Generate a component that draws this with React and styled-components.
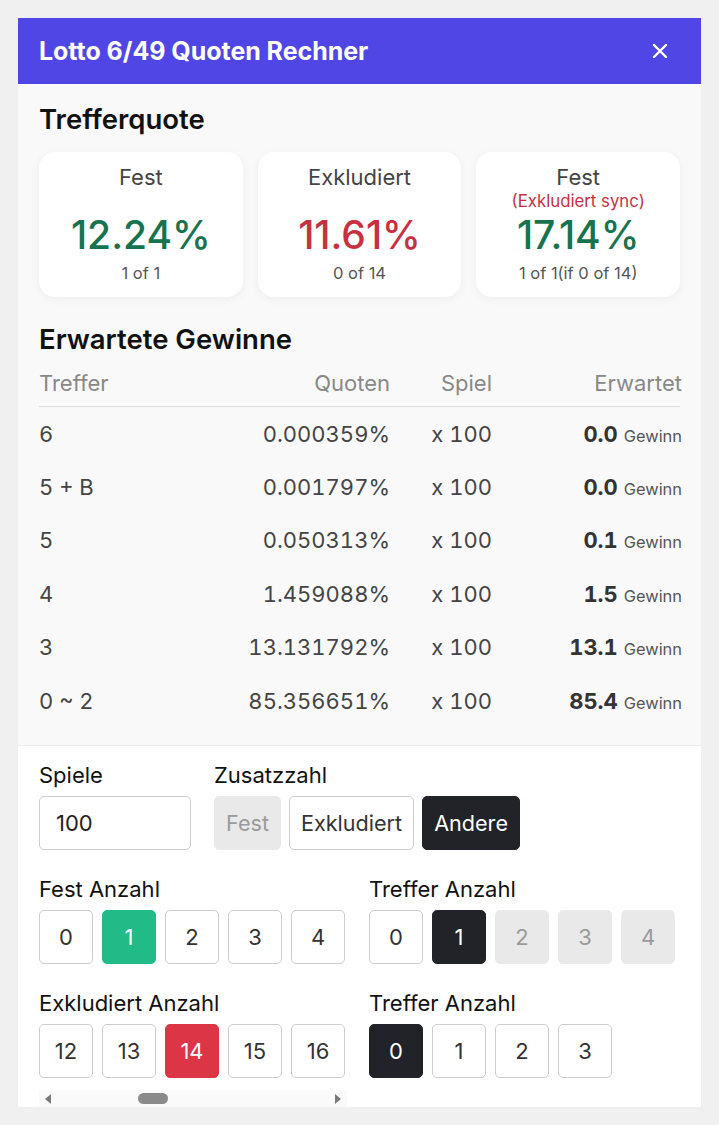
import React from 'react';
import styled, { createGlobalStyle } from 'styled-components';

const GlobalStyle = createGlobalStyle`
  html, body {
    margin: 0;
    padding: 0;
    background: #f0f0f0;
    font-family: Inter, "Noto Sans", "Liberation Sans", sans-serif;
    color: #222;
  }
  * { box-sizing: border-box; }
`;

const Page = styled.div`
  padding: 18px 18px 0 18px;
`;

const Panel = styled.div`
  width: 683px;
  background: #f9f9f9;
`;

const Header = styled.div`
  height: 66px;
  background: #4f46e5;
  display: flex;
  align-items: center;
  justify-content: space-between;
  padding: 0 21px;
`;

const Title = styled.h1`
  margin: 0;
  color: #fff;
  font-size: 25px;
  font-weight: 700;
  letter-spacing: -0.05px;
`;

const CloseButton = styled.button`
  border: 0;
  background: transparent;
  padding: 0;
  width: 24px;
  height: 24px;
  display: flex;
  align-items: center;
  justify-content: center;
  margin-right: 8px;
  cursor: pointer;
`;

const Section = styled.div`
  padding: ${(p) => p.$pad || '19px 21px 0'};
`;

const SectionTitle = styled.h2`
  margin: 0;
  font-size: 27.5px;
  line-height: 32px;
  font-weight: 600;
  color: #111;
`;

const Cards = styled.div`
  display: grid;
  grid-template-columns: repeat(3, 1fr);
  gap: 15px;
  margin-top: 17px;
`;

const Card = styled.div`
  background: #fff;
  border-radius: 16px;
  box-shadow: 0 2px 10px rgba(0, 0, 0, 0.05);
  padding: 13px 6px 14px;
  text-align: center;
`;

const CardLabel = styled.div`
  font-size: 22px;
  line-height: 24px;
  color: #444;
`;

const CardNote = styled.div`
  font-size: 16.8px;
  line-height: 24px;
  color: #c8303f;
  visibility: ${(p) => (p.$hidden ? 'hidden' : 'visible')};
`;

const Percent = styled.div`
  font-size: 39px;
  line-height: 44px;
  font-weight: 500;
  color: ${(p) => (p.$red ? '#c8303f' : '#17734f')};
`;

const CardSub = styled.div`
  margin-top: 6px;
  font-size: 16.5px;
  line-height: 20px;
  color: #555;
`;

const Table = styled.div`
  margin-top: 5px;
`;

const Row = styled.div`
  display: grid;
  grid-template-columns: 151px 200px 102px 190px;
  align-items: center;
  height: ${(p) => (p.$head ? '47px' : '53.4px')};
  border-bottom: ${(p) => (p.$head ? '1px solid #ddd' : 'none')};
  font-size: 22px;
  color: ${(p) => (p.$head ? '#888' : '#444')};
  font-variant-numeric: tabular-nums;
`;

const Cell = styled.div`
  text-align: ${(p) => (p.$right ? 'right' : 'left')};
  white-space: nowrap;
`;

const Amount = styled.b`
  font-weight: 700;
  color: #333;
`;

const Unit = styled.span`
  font-size: 16.4px;
  color: #555;
  margin-left: 6px;
`;

const Controls = styled.div`
  margin-top: 18px;
  background: #fff;
  border-top: 1px solid #ececec;
  padding: 16px 21px 0;
`;

const TopRow = styled.div`
  display: flex;
  gap: 23px;
`;

const Field = styled.div`
  display: flex;
  flex-direction: column;
`;

const Label = styled.div`
  font-size: 22px;
  line-height: 26px;
  color: #111;
  margin-bottom: 8px;
`;

const Input = styled.input`
  width: 152px;
  height: 54px;
  border: 1px solid #ccc;
  border-radius: 5px;
  padding: 0 16px;
  font-size: 22px;
  font-family: inherit;
  color: #222;
  outline: none;
`;

const ButtonRow = styled.div`
  display: flex;
  gap: 8px;
`;

const tones = {
  default: { bg: '#fff', fg: '#333', border: '#ccc' },
  disabled: { bg: '#e9e9e9', fg: '#9a9a9a', border: '#e9e9e9' },
  dark: { bg: '#212329', fg: '#fff', border: '#212329' },
  green: { bg: '#22bb88', fg: '#fff', border: '#22bb88' },
  red: { bg: '#dc3545', fg: '#fff', border: '#dc3545' },
};

const Btn = styled.button`
  flex: none;
  height: 54px;
  width: ${(p) => (p.$square ? '54px' : 'auto')};
  padding: 0 ${(p) => (p.$square ? '0' : '11px')};
  border-radius: 5px;
  border: 1px solid ${(p) => tones[p.$tone || 'default'].border};
  background: ${(p) => tones[p.$tone || 'default'].bg};
  color: ${(p) => tones[p.$tone || 'default'].fg};
  font-family: inherit;
  font-size: ${(p) => (p.$square ? '22px' : '21.6px')};
  cursor: pointer;
`;

const Grid = styled.div`
  display: grid;
  grid-template-columns: 308px 308px;
  column-gap: 22px;
  row-gap: 26px;
  margin-top: 26px;
`;

const NumberRow = styled.div`
  display: flex;
  gap: 9px;
`;

const Scroller = styled.div`
  width: 308px;
  overflow: hidden;
`;

const ScrollTrack = styled.div`
  margin-top: 12px;
  height: 17px;
  background: #fafafa;
  display: flex;
  align-items: center;
  padding: 0 6px;
`;

const Arrow = styled.span`
  width: 0;
  height: 0;
  border-top: 5px solid transparent;
  border-bottom: 5px solid transparent;
  border-${(p) => (p.$right ? 'left' : 'right')}: 6px solid #7a7a7a;
  margin-left: ${(p) => (p.$right ? 'auto' : '0')};
`;

const Thumb = styled.span`
  width: 30px;
  height: 11px;
  border-radius: 6px;
  background: #8a8a8a;
  margin-left: 87px;
`;

const XIcon = () => (
  <svg width="18" height="18" viewBox="0 0 18 18">
    <path d="M3 3 L15 15 M15 3 L3 15" stroke="#fff" strokeWidth="2.4" strokeLinecap="round" />
  </svg>
);

const rows = [
  ['6', '0.000359%', '0.0'],
  ['5 + B', '0.001797%', '0.0'],
  ['5', '0.050313%', '0.1'],
  ['4', '1.459088%', '1.5'],
  ['3', '13.131792%', '13.1'],
  ['0 ~ 2', '85.356651%', '85.4'],
];

const NumberGroup = ({ values, pick }) => (
  <NumberRow>
    {values.map((v) => (
      <Btn key={v} $square $tone={pick(v)}>
        {v}
      </Btn>
    ))}
  </NumberRow>
);

export default function App() {
  return (
    <Page>
      <GlobalStyle />
      <Panel>
        <Header>
          <Title>Lotto 6/49 Quoten Rechner</Title>
          <CloseButton aria-label="close">
            <XIcon />
          </CloseButton>
        </Header>

        <Section>
          <SectionTitle>Trefferquote</SectionTitle>
          <Cards>
            <Card>
              <CardLabel>Fest</CardLabel>
              <CardNote $hidden>-</CardNote>
              <Percent>12.24%</Percent>
              <CardSub>1 of 1</CardSub>
            </Card>
            <Card>
              <CardLabel>Exkludiert</CardLabel>
              <CardNote $hidden>-</CardNote>
              <Percent $red>11.61%</Percent>
              <CardSub>0 of 14</CardSub>
            </Card>
            <Card>
              <CardLabel>Fest</CardLabel>
              <CardNote>(Exkludiert sync)</CardNote>
              <Percent>17.14%</Percent>
              <CardSub>1 of 1(if 0 of 14)</CardSub>
            </Card>
          </Cards>
        </Section>

        <Section $pad="26px 21px 0">
          <SectionTitle>Erwartete Gewinne</SectionTitle>
          <Table>
            <Row $head>
              <Cell>Treffer</Cell>
              <Cell $right>Quoten</Cell>
              <Cell $right>Spiel</Cell>
              <Cell $right>Erwartet</Cell>
            </Row>
            {rows.map(([hit, odds, exp]) => (
              <Row key={hit}>
                <Cell>{hit}</Cell>
                <Cell $right>{odds}</Cell>
                <Cell $right>x 100</Cell>
                <Cell $right>
                  <Amount>{exp}</Amount>
                  <Unit>Gewinn</Unit>
                </Cell>
              </Row>
            ))}
          </Table>
        </Section>

        <Controls>
          <TopRow>
            <Field>
              <Label>Spiele</Label>
              <Input defaultValue="100" />
            </Field>
            <Field>
              <Label>Zusatzzahl</Label>
              <ButtonRow>
                <Btn $tone="disabled">Fest</Btn>
                <Btn>Exkludiert</Btn>
                <Btn $tone="dark">Andere</Btn>
              </ButtonRow>
            </Field>
          </TopRow>

          <Grid>
            <Field>
              <Label>Fest Anzahl</Label>
              <NumberGroup values={[0, 1, 2, 3, 4]} pick={(v) => (v === 1 ? 'green' : 'default')} />
            </Field>
            <Field>
              <Label>Treffer Anzahl</Label>
              <NumberGroup
                values={[0, 1, 2, 3, 4]}
                pick={(v) => (v === 1 ? 'dark' : v > 1 ? 'disabled' : 'default')}
              />
            </Field>
            <Field>
              <Label>Exkludiert Anzahl</Label>
              <Scroller>
                <NumberGroup values={[12, 13, 14, 15, 16]} pick={(v) => (v === 14 ? 'red' : 'default')} />
              </Scroller>
              <ScrollTrack>
                <Arrow />
                <Thumb />
                <Arrow $right />
              </ScrollTrack>
            </Field>
            <Field>
              <Label>Treffer Anzahl</Label>
              <NumberGroup values={[0, 1, 2, 3]} pick={(v) => (v === 0 ? 'dark' : 'default')} />
            </Field>
          </Grid>
        </Controls>
      </Panel>
    </Page>
  );
}
